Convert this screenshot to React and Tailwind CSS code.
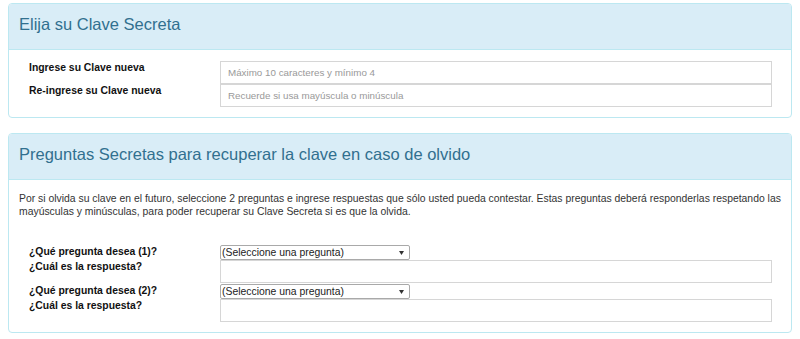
// ===== HELPERS =====

const PanelHeading = ({ children }) => (
  <div className="rounded-t-[3px] border-b border-[#bce8f1] bg-[#d9edf7] px-[10px] pt-[11px] pb-[16px]">
    <h3 className="text-[16.5px] leading-[18px] text-[#31708f]">{children}</h3>
  </div>
)

const TextInput = ({ placeholder }) => (
  <input
    type="password"
    placeholder={placeholder}
    className="box-border block h-[23px] w-full border border-[#d6d6d6] bg-white pl-[7px] text-[9.8px] text-[#333] outline-none placeholder:text-[#999]"
  />
)

const FakeSelect = () => (
  <div className="box-border flex h-[15px] w-[190px] items-center justify-between rounded-[2px] border border-[#a9a9a9] bg-white pr-[5px] pl-[1px]">
    <span className="text-[10.4px] leading-[13px] text-[#222]">(Seleccione una pregunta)</span>
    <svg width="5" height="4" viewBox="0 0 5 4">
      <path d="M0 0 H5 L2.5 4 Z" fill="#333" />
    </svg>
  </div>
)

const Label = ({ children }) => (
  <div className="text-[10.4px] leading-[13px] font-bold text-[#111]">{children}</div>
)

// ===== APP =====

const App = () => {
  return (
    <main
      className="min-h-[339px] bg-white px-[8px] pt-[3px]"
      style={{ fontFamily: '"Liberation Sans", Arial, sans-serif' }}
    >
      {/* ------ Clave secreta ------ */}
      <section className="rounded-[4px] border border-[#bce8f1]">
        <PanelHeading>Elija su Clave Secreta</PanelHeading>

        <div className="grid grid-cols-[191px_1fr] pt-[11px] pr-[19px] pb-[10px] pl-[20px]">
          <Label>Ingrese su Clave nueva</Label>
          <TextInput placeholder="Máximo 10 caracteres y mínimo 4" />
          <Label>Re-ingrese su Clave nueva</Label>
          <TextInput placeholder="Recuerde si usa mayúscula o minúscula" />
        </div>
      </section>

      {/* ------ Preguntas secretas ------ */}
      <section className="mt-[15px] rounded-[4px] border border-[#bce8f1]">
        <PanelHeading>Preguntas Secretas para recuperar la clave en caso de olvido</PanelHeading>

        <div className="pt-[12px] pb-[10px]">
          <p className="px-[10px] text-[10.4px] leading-[13px] whitespace-nowrap text-[#333]">
            Por si olvida su clave en el futuro, seleccione 2 preguntas e ingrese respuestas que sólo usted pueda
            contestar. Estas preguntas deberá responderlas respetando las
            <br />
            mayúsculas y minúsculas, para poder recuperar su Clave Secreta si es que la olvida.
          </p>

          <div className="mt-[27px] grid grid-cols-[191px_1fr] pr-[19px] pl-[20px]">
            <Label>¿Qué pregunta desea (1)?</Label>
            <FakeSelect />
            <Label>¿Cuál es la respuesta?</Label>
            <TextInput />
            <div className="mt-[1px]">
              <Label>¿Qué pregunta desea (2)?</Label>
            </div>
            <div className="mt-[1px]">
              <FakeSelect />
            </div>
            <Label>¿Cuál es la respuesta?</Label>
            <TextInput />
          </div>
        </div>
      </section>
    </main>
  )
}

// ===== EXPORTS =====

export default App
